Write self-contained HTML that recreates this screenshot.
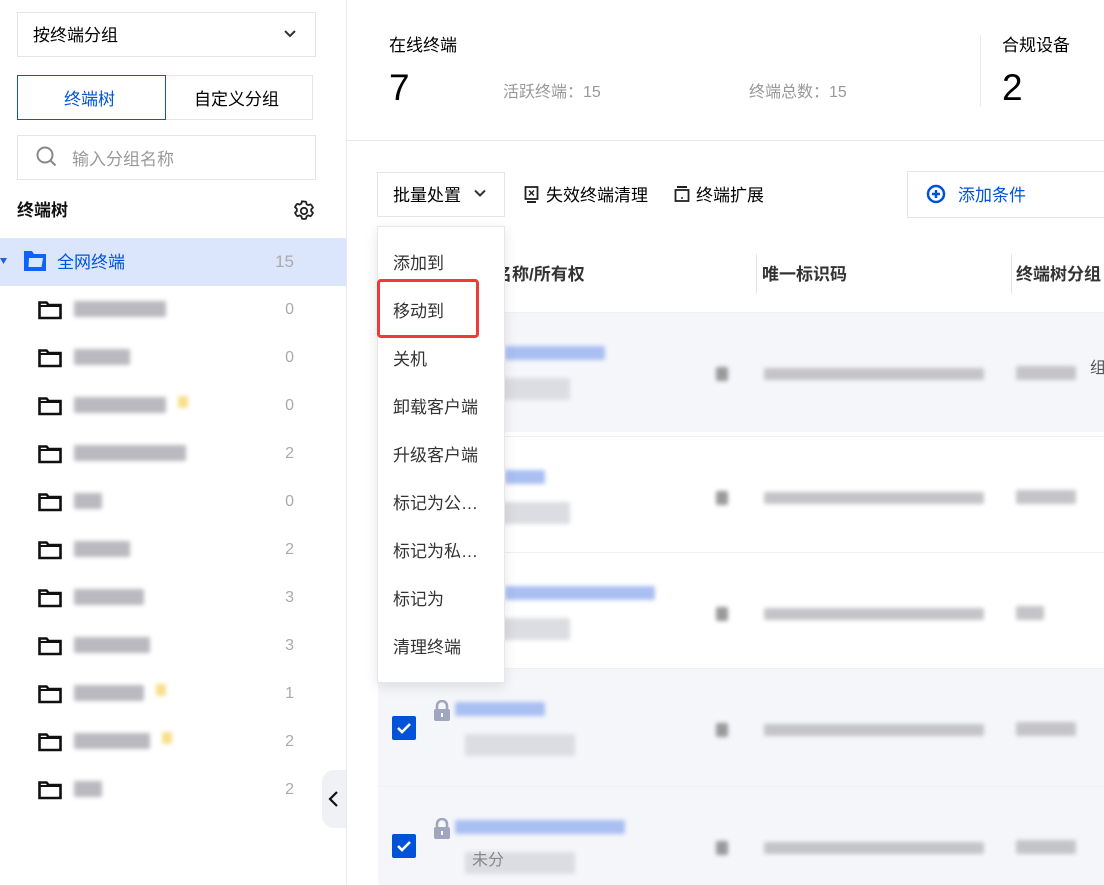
<!DOCTYPE html>
<html><head><meta charset="utf-8"><style>
*{box-sizing:border-box;margin:0;padding:0}
body{width:1104px;height:885px;overflow:hidden;background:#fff;font-family:"Liberation Sans","Noto Sans CJK SC",sans-serif;color:#000;position:relative;line-height:1.6}
.a{position:absolute}
.box{position:absolute;border:1px solid #e3e5ea;background:#fff}
.blur{position:absolute;filter:blur(2px);border-radius:2px}
.row{position:absolute;left:0;width:346px;height:48px}
.cnt{position:absolute;right:52px;top:11px;font-size:16px;color:#aaa}
.fold{position:absolute;left:38px;top:14px}
.mi{position:absolute;left:393px;font-size:17px;color:#333}
</style></head><body>
<div class="a" style="left:346px;top:0;width:1px;height:885px;background:#e8e9ee"></div>
<div class="box" style="left:17px;top:12px;width:299px;height:45px"></div>
<div class="a" style="left:33px;top:22px;font-size:17px">按终端分组</div>
<svg class="a" style="left:283px;top:29px" width="14" height="10"><path d="M2 2l5 5 5-5" stroke="#333" stroke-width="2" fill="none"/></svg>
<div class="box" style="left:165px;top:75px;width:148px;height:45px"></div>
<div class="a" style="left:17px;top:75px;width:149px;height:45px;border:1px solid #0f52d6"></div>
<div class="a" style="left:64px;top:86px;font-size:17px;color:#0052d9">终端树</div>
<div class="a" style="left:194px;top:86px;font-size:17px">自定义分组</div>
<div class="box" style="left:17px;top:135px;width:299px;height:45px"></div>
<svg class="a" style="left:35px;top:145px" width="24" height="24"><circle cx="10" cy="10" r="7.5" stroke="#888" stroke-width="2" fill="none"/><path d="M15.5 15.5l5 5" stroke="#888" stroke-width="2"/></svg>
<div class="a" style="left:72px;top:146px;font-size:17px;color:#999">输入分组名称</div>
<div class="a" style="left:17px;top:197px;font-size:17px;font-weight:bold;color:#111">终端树</div>
<svg class="a" style="left:292px;top:199px" width="24" height="24" viewBox="0 0 24 24"><path d="M12 2.5l2 .3.6 2.4 1.6.9 2.3-.8 1.4 1.5 1.1 1.8-1.8 1.7v1.9l1.8 1.6-1.1 1.9-1.4 1.5-2.3-.8-1.6.9-.6 2.4-2 .3-2-.3-.6-2.4-1.6-.9-2.3.8-1.4-1.5-1.1-1.9 1.8-1.6V9.8L2.9 8.1 4 6.3l1.4-1.5 2.3.8 1.6-.9.6-2.4z" stroke="#222" stroke-width="1.8" fill="none" stroke-linejoin="round"/><circle cx="12" cy="12" r="3.2" stroke="#222" stroke-width="1.8" fill="none"/></svg>
<div class="row" style="top:238px;background:#dbe6fd">
<svg class="a" style="left:0;top:19px" width="8" height="8"><path d="M0 1h7L3.5 7z" fill="#1f5fe0"/></svg>
<svg class="a" style="left:22px;top:10px" width="26" height="26"><path d="M2 3h8l2 3h12v17H2z" fill="#0f62fe"/><path d="M7 10h14l-1.5 9h-13z" fill="#dbe6fd"/></svg>
<div class="a" style="left:57px;top:11px;font-size:17px;color:#0052d9">全网终端</div>
<div class="cnt" style="color:#aaa;top:10px;font-size:17px">15</div>
</div>
<div id="tree"></div>
<div class="a" style="left:322px;top:770px;width:24px;height:58px;background:#f0f1f4;border-radius:12px 0 0 12px"></div>
<svg class="a" style="left:327px;top:790px" width="14" height="18"><path d="M10 2L3 9l7 7" stroke="#111" stroke-width="2.2" fill="none"/></svg>

<div class="a" style="left:347px;top:140px;width:757px;height:1px;background:#e8e9ee"></div>
<div class="a" style="left:389px;top:32px;font-size:17px">在线终端</div>
<div class="a" style="left:389px;top:58px;font-size:37px">7</div>
<div class="a" style="left:503px;top:80px;font-size:16px;color:#999">活跃终端：15</div>
<div class="a" style="left:749px;top:80px;font-size:16px;color:#999">终端总数：15</div>
<div class="a" style="left:980px;top:35px;width:1px;height:71px;background:#e8e9ee"></div>
<div class="a" style="left:1002px;top:32px;font-size:17px">合规设备</div>
<div class="a" style="left:1002px;top:58px;font-size:37px">2</div>

<div class="box" style="left:377px;top:172px;width:128px;height:45px"></div>
<div class="a" style="left:393px;top:182px;font-size:17px">批量处置</div>
<svg class="a" style="left:474px;top:189px" width="12" height="9"><path d="M1 1.5l5 5 5-5" stroke="#333" stroke-width="2" fill="none"/></svg>
<svg class="a" style="left:524px;top:186px" width="16" height="18"><rect x="1.5" y="1" width="12" height="12" stroke="#222" stroke-width="1.8" fill="none"/><path d="M5 4.5l5 5M10 4.5l-5 5" stroke="#222" stroke-width="1.5"/><path d="M3 16h9" stroke="#222" stroke-width="2"/></svg>
<div class="a" style="left:546px;top:182px;font-size:17px">失效终端清理</div>
<svg class="a" style="left:674px;top:185px" width="16" height="18"><path d="M3 2h10" stroke="#222" stroke-width="2"/><rect x="1.5" y="5" width="13" height="11" stroke="#222" stroke-width="1.8" fill="none"/><circle cx="8" cy="13" r="1" fill="#222"/></svg>
<div class="a" style="left:696px;top:182px;font-size:17px">终端扩展</div>
<div class="box" style="left:907px;top:171px;width:210px;height:47px"></div>
<svg class="a" style="left:926px;top:184px" width="20" height="20"><circle cx="10" cy="10" r="8" stroke="#0052d9" stroke-width="2.5" fill="none"/><path d="M10 6v8M6 10h8" stroke="#0052d9" stroke-width="2.5"/></svg>
<div class="a" style="left:958px;top:182px;font-size:17px;color:#0052d9">添加条件</div>

<div class="a" style="left:756px;top:254px;width:1px;height:40px;background:#e3e5ea"></div>
<div class="a" style="left:1011px;top:254px;width:1px;height:40px;background:#e3e5ea"></div>
<div class="a" style="left:495px;top:261px;font-size:17px;font-weight:bold;color:#333">名称/所有权</div>
<div class="a" style="left:762px;top:261px;font-size:17px;font-weight:bold;color:#333">唯一标识码</div>
<div class="a" style="left:1016px;top:261px;font-size:17px;font-weight:bold;color:#333;white-space:nowrap">终端树分组</div>
<div id="rows"></div>

<div class="a" style="left:377px;top:226px;width:128px;height:457px;background:#fff;border:1px solid #e6e7eb;box-shadow:0 4px 12px rgba(0,0,0,.1)"></div>
<div class="mi" style="top:250px">添加到</div>
<div class="a" style="left:377px;top:279px;width:102px;height:59px;border:3.5px solid #f03a3a;border-radius:4px"></div>
<div class="mi" style="top:298px">移动到</div>
<div class="mi" style="top:346px">关机</div>
<div class="mi" style="top:394px">卸载客户端</div>
<div class="mi" style="top:442px">升级客户端</div>
<div class="mi" style="top:490px">标记为公…</div>
<div class="mi" style="top:538px">标记为私…</div>
<div class="mi" style="top:586px">标记为</div>
<div class="mi" style="top:634px">清理终端</div>
<script>
var t='',counts=[0,0,0,2,0,2,3,3,1,2,2],w=[92,56,92,112,28,56,70,76,70,76,28],star=[0,0,1,0,0,0,0,0,1,1,0];
for(var i=0;i<11;i++){var y=286+i*48;
t+='<div class="row" style="top:'+y+'px"><svg class="fold" width="24" height="20"><path d="M1.5 2.5h7l2 2.5h12v13h-21z" stroke="#111" stroke-width="2.6" fill="none"/><path d="M1.5 6h21" stroke="#111" stroke-width="2"/></svg>'+
'<div class="blur" style="left:74px;top:15px;width:'+w[i]+'px;height:16px;background:#b9b9bf"></div>'+
(star[i]?'<div class="blur" style="left:'+(74+w[i]+12)+'px;top:14px;width:10px;height:12px;background:#f7df8a"></div>':'')+
'<div class="cnt">'+counts[i]+'</div></div>';}
document.getElementById('tree').innerHTML=t;
var r='',tops=[312,436,552,668,786],hs=[120,116,116,118,99],bg=['#f5f6fa','#fff','#fff','#f5f6fa','#f5f6fa'],nw=[100,40,150,90,170];
for(var j=0;j<5;j++){var y=tops[j];
r+='<div class="a" style="left:378px;top:'+y+'px;width:726px;height:'+hs[j]+'px;background:'+bg[j]+';border-top:1px solid #eef0f4"></div>';
var ny=y+34, sy=y+66;
var nx=j<3?505:455;
r+='<div class="blur" style="left:'+nx+'px;top:'+ny+'px;width:'+nw[j]+'px;height:14px;background:#a9bff2"></div>';
r+='<div class="blur" style="left:'+(j<3?500:465)+'px;top:'+sy+'px;width:'+(j<3?70:110)+'px;height:22px;background:#dcdde2"></div>';
r+='<div class="blur" style="left:716px;top:'+(y+55)+'px;width:12px;height:14px;background:#999"></div>';
r+='<div class="blur" style="left:764px;top:'+(y+56)+'px;width:220px;height:12px;background:#c4c4c8"></div>';
r+='<div class="blur" style="left:1016px;top:'+(y+54)+'px;width:'+(j==2?28:60)+'px;height:14px;background:#c4c4c8"></div>';
if(j>=3){r+='<div class="a" style="left:392px;top:'+(y+48)+'px;width:24px;height:24px;background:#0052d9;border-radius:2px"></div><svg class="a" style="left:395px;top:'+(y+51)+'px" width="18" height="18"><path d="M3 9l4 4 8-8" stroke="#fff" stroke-width="2.6" fill="none"/></svg>';
r+='<svg class="a" style="left:432px;top:'+(y+32)+'px" width="20" height="22"><path d="M5 9V6a5 5 0 0 1 10 0v3" stroke="#a0a6bd" stroke-width="2.6" fill="none"/><rect x="2" y="9" width="16" height="12" rx="2" fill="#a0a6bd"/><rect x="9" y="13" width="2" height="4" fill="#fff"/></svg>';}
}
r+='<div class="a" style="left:472px;top:848px;font-size:16px;color:#888">未分</div>';
r+='<div class="a" style="left:1090px;top:356px;font-size:16px;color:#555">组</div>';
document.getElementById('rows').innerHTML=r;
</script>
</body></html>
